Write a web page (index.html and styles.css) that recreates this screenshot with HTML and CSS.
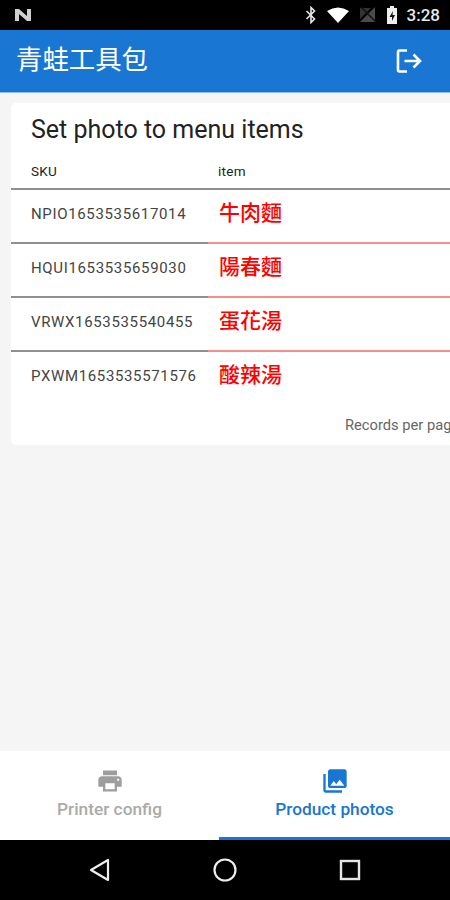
FILE: index.html
```html
<!DOCTYPE html>
<html>
<head>
    <meta charset="utf-8">
    <title>青蛙工具包</title>
    <link rel="stylesheet" href="styles.css">
</head>
<body>
    <div class="status-bar">
        <svg class="status-n" width="20" height="16" viewBox="0 0 20 16"><path d="M2 2h4l8 7V2h4v12h-4L6 7v7H2z" fill="#d0d0d0"/></svg>
        <div class="status-right">
            <svg width="12" height="18" viewBox="0 0 12 18"><path d="M1.500 5l8 8-3.500 3.500v-15L9.500 5l-8 8" fill="none" stroke="#e8e8e8" stroke-width="1.600"/></svg>
            <svg width="24" height="18" viewBox="0 0 24 18"><path d="M1 5Q12-2 23 5L12 17z" fill="#fff"/></svg>
            <svg width="18" height="18" viewBox="0 0 18 18"><path d="M1 16L16 1v15z" fill="#4a4a4a"/><path d="M1 2h11L1 13z" fill="#333"/><path d="M2 1l15 15" stroke="#111" stroke-width="1.500"/></svg>
            <svg width="12" height="20" viewBox="0 0 12 20"><path d="M4 1h4v2h3v16H1V3h3z" fill="#eee"/><path d="M7 6L3.500 12H6v4l3-6H6.500z" fill="#111"/></svg>
            <span class="status-time">3:28</span>
        </div>
    </div>

    <header class="app-bar">
        <h1>青蛙工具包</h1>
        <svg class="logout" width="28" height="28" viewBox="0 0 28 28"><path d="M12 3.500H4.500a1.500 1.500 0 0 0-1.500 1.500v18a1.500 1.500 0 0 0 1.500 1.500H12M9.500 14H25M18.500 7.500L25 14l-6.500 6.500" fill="none" stroke="#fff" stroke-width="2.600"/></svg>
    </header>

    <main class="content">
        <section class="card">
            <h2>Set photo to menu items</h2>
            <div class="table">
                <div class="row head">
                    <div class="col-sku">SKU</div>
                    <div class="col-item">item</div>
                </div>
                <div class="row">
                    <div class="col-sku">NPIO1653535617014</div>
                    <div class="col-item">牛肉麵</div>
                </div>
                <div class="row">
                    <div class="col-sku">HQUI1653535659030</div>
                    <div class="col-item">陽春麵</div>
                </div>
                <div class="row">
                    <div class="col-sku">VRWX1653535540455</div>
                    <div class="col-item">蛋花湯</div>
                </div>
                <div class="row last">
                    <div class="col-sku">PXWM1653535571576</div>
                    <div class="col-item">酸辣湯</div>
                </div>
            </div>
            <div class="pager">Records per page</div>
        </section>
    </main>

    <nav class="tabs">
        <div class="tab">
            <svg width="28" height="28" viewBox="0 0 24 24"><path d="M19 8H5c-1.660 0-3 1.340-3 3v6h4v4h12v-4h4v-6c0-1.660-1.340-3-3-3zm-3 11H8v-5h8v5zm3-7c-.55 0-1-.45-1-1s.45-1 1-1 1 .45 1 1-.45 1-1 1zm-1-9H6v4h12V3z" fill="#9e9e9e"/></svg>
            <span>Printer config</span>
        </div>
        <div class="tab active">
            <svg width="30" height="30" viewBox="0 0 24 24"><path d="M22 16V4c0-1.100-.9-2-2-2H8c-1.100 0-2 .9-2 2v12c0 1.100.9 2 2 2h12c1.100 0 2-.9 2-2zm-11-4l2.030 2.710L16 11l4 5H8l3-4zM2 6v14c0 1.100.9 2 2 2h14v-2H4V6H2z" fill="#1976d2"/></svg>
            <span>Product photos</span>
        </div>
    </nav>

    <div class="nav-bar">
        <svg width="24" height="26" viewBox="0 0 24 26"><path d="M20 3v20L3 13z" fill="none" stroke="#eee" stroke-width="2.200" stroke-linejoin="round"/></svg>
        <svg width="26" height="26" viewBox="0 0 26 26"><circle cx="13" cy="13" r="10.500" fill="none" stroke="#eee" stroke-width="2.200"/></svg>
        <svg width="24" height="24" viewBox="0 0 24 24"><rect x="3" y="3" width="18" height="18" fill="none" stroke="#e4e4e4" stroke-width="2.400"/></svg>
    </div>
</body>
</html>
```

FILE: styles.css
```css
html, body {
    margin: 0;
    padding: 0;
    height: 100%;
}
body {
    width: 450px;
    height: 900px;
    display: flex;
    flex-direction: column;
    overflow: hidden;
    background-color: #f5f5f5;
    font-family: Roboto, "Noto Sans CJK TC", sans-serif;
}
.status-bar {
    height: 30px;
    flex: none;
    background-color: #000;
    display: flex;
    justify-content: space-between;
    align-items: center;
    padding: 0 10px 0 13px;
}
.status-right {
    display: flex;
    align-items: center;
    gap: 9px;
}
.status-time {
    color: #e8e8e8;
    font-size: 17px;
    font-weight: 500;
}
.app-bar {
    flex: none;
    background-color: #1976d2;
    border-bottom: 1px solid #90bdea;
    box-sizing: border-box;
    height: 63px;
    display: flex;
    justify-content: space-between;
    align-items: center;
    padding: 0 27px 3px 16px;
}
.app-bar h1 {
    margin: 0 0 4px;
    color: #fff;
    font-size: 26.400px;
    font-weight: 400;
}
.logout {
    margin-top: 2px;
}
.content {
    flex: 1;
    padding: 10px 0 0 11px;
    overflow: hidden;
}
.card {
    width: 560px;
    height: 342px;
    background-color: #fff;
    border-radius: 5px;
}
.card h2 {
    margin: 0;
    padding: 12px 0 0 20px;
    height: 40px;
    color: #222;
    font-size: 25px;
    font-weight: 400;
}
.table {
    margin-top: 2px;
}
.row {
    display: flex;
    height: 54px;
    align-items: center;
    font-size: 15px;
    letter-spacing: 0.65px;
    color: #444;
}
.row.head {
    height: 33px;
    font-size: 13.500px;
    color: #222;
    letter-spacing: 0.3px;
}
.col-sku {
    width: 197px;
    height: 100%;
    box-sizing: border-box;
    padding: 0 0 4px 20px;
    display: flex;
    align-items: center;
    border-bottom: 2px solid #8f8f8f;
}
.col-item {
    flex: 1;
    height: 100%;
    box-sizing: border-box;
    padding: 0 0 10px 11px;
    display: flex;
    align-items: center;
    color: #ff0000;
    font-size: 21px;
    font-weight: 500;
    letter-spacing: 0;
    border-bottom: 2px solid #f78f8f;
}
.row.head .col-item {
    padding-left: 10px;
    padding-bottom: 4px;
    color: #222;
    font-size: 13.500px;
    font-weight: 400;
    letter-spacing: 0.3px;
    border-bottom-color: #8f8f8f;
}
.row.last .col-sku,
.row.last .col-item {
    border-bottom-color: transparent;
}
.pager {
    margin-top: 10px;
    padding-left: 334px;
    font-size: 14.700px;
    color: #666;
}
.tabs {
    flex: none;
    height: 89px;
    display: flex;
    background-color: #fff;
}
.tab {
    flex: 1;
    display: flex;
    flex-direction: column;
    align-items: center;
    justify-content: flex-start;
    padding-top: 16px;
    box-sizing: border-box;
    color: #aaaaaa;
    font-size: 17.300px;
    font-weight: 500;
}
.tab svg {
    height: 28px;
}
.tab span {
    margin-top: 4px;
}
.tab.active {
    flex: none;
    width: 231px;
    color: #1976d2;
    border-bottom: 3px solid #1976d2;
}
.nav-bar {
    flex: none;
    height: 60px;
    background-color: #000;
    display: flex;
    justify-content: space-between;
    align-items: center;
    padding: 0 88px 0 88px;
}
```
